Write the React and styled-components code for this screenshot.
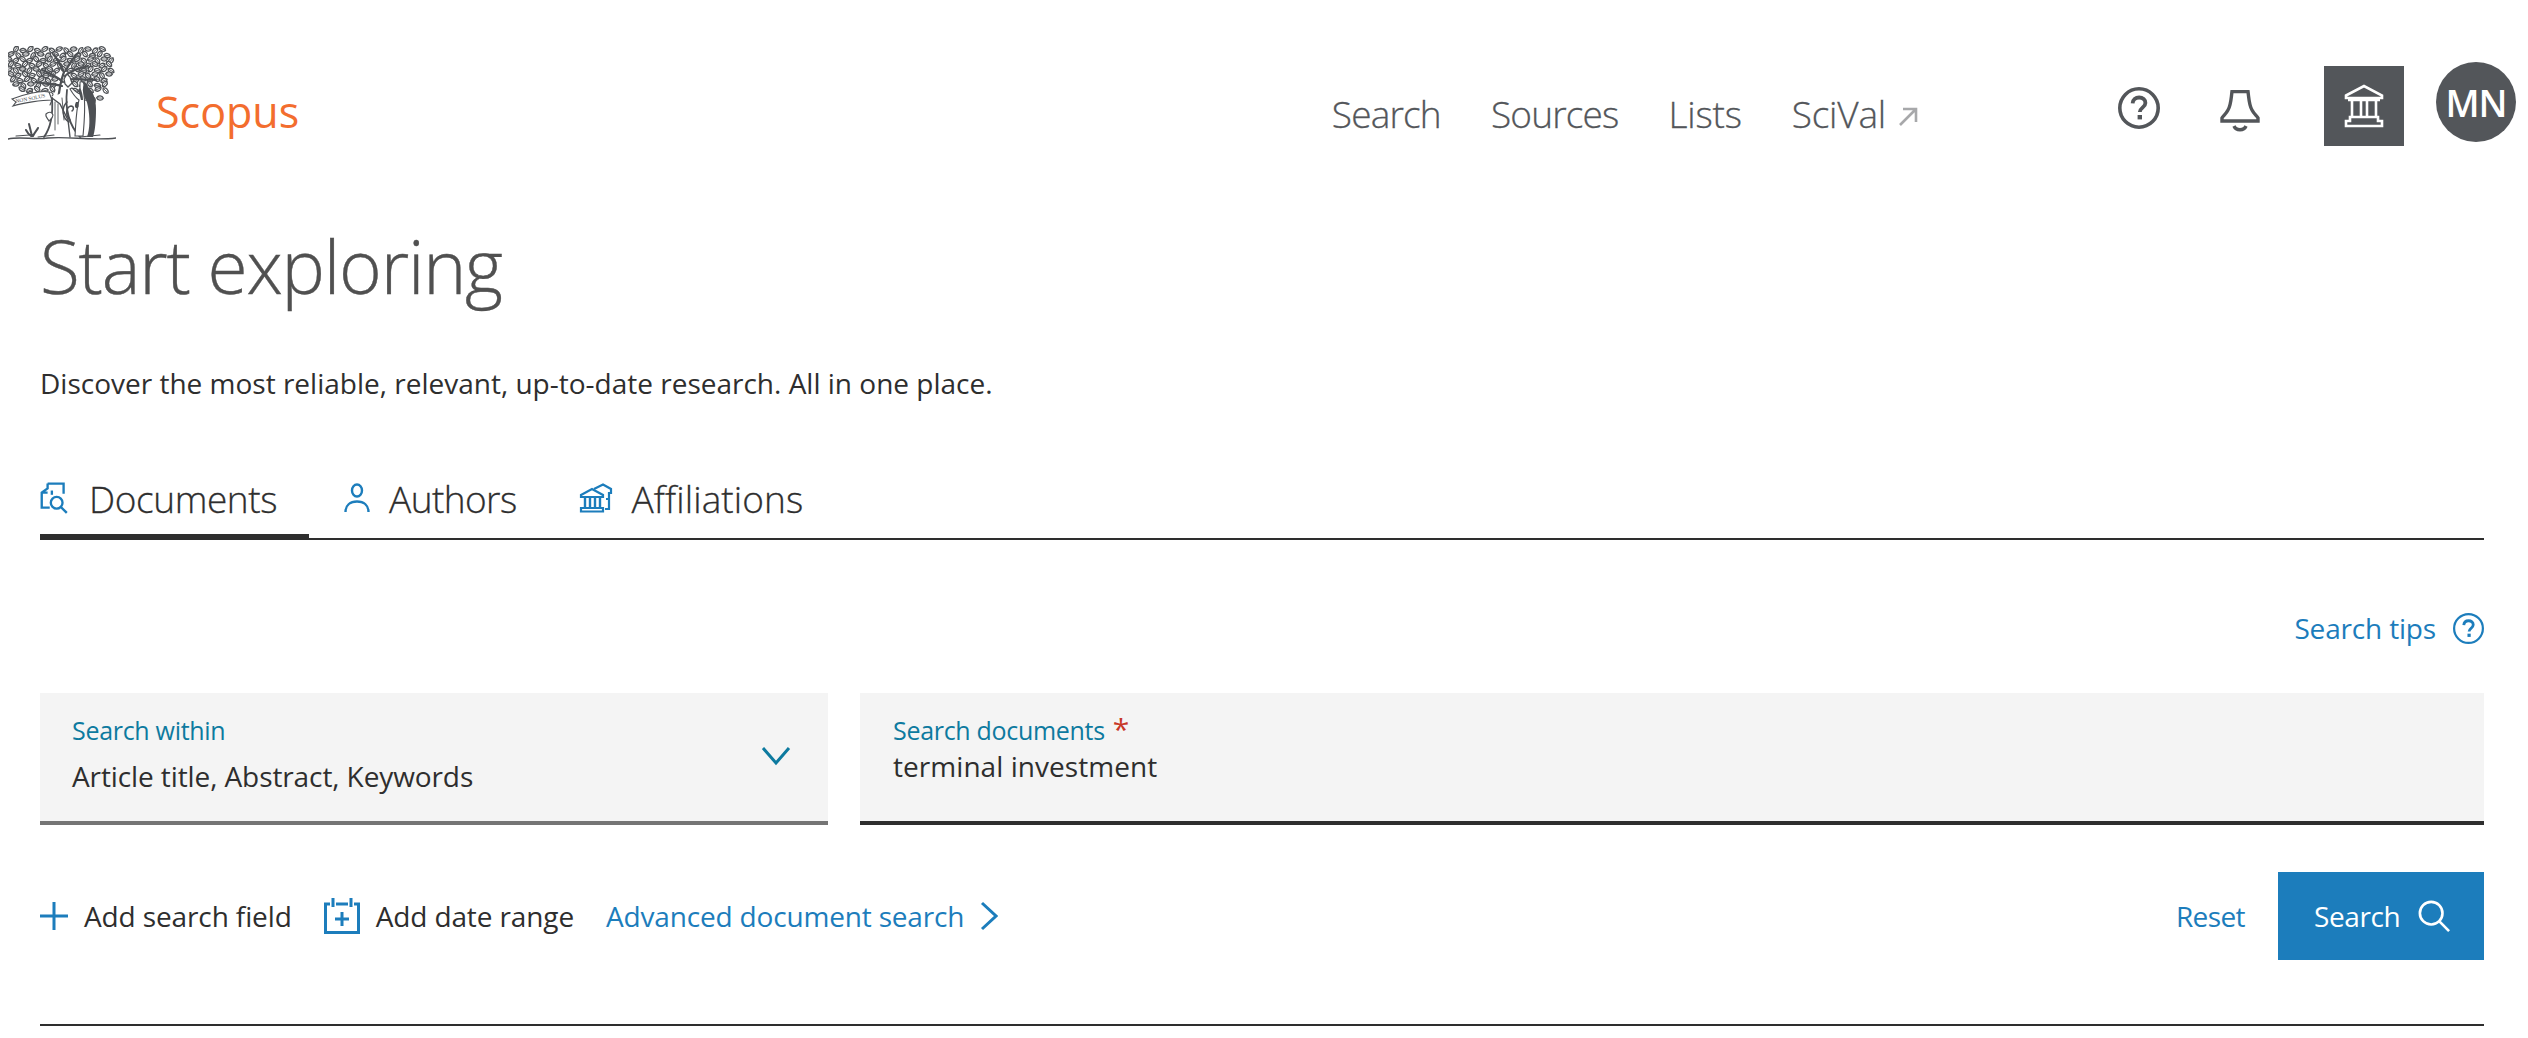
import React from "react";
import styled, { createGlobalStyle } from "styled-components";

const Global = createGlobalStyle`
  html, body { margin: 0; padding: 0; background: #fff; }
  body { font-family: "Open Sans", "Noto Sans", sans-serif; color: #2e2e2e; }
  * { box-sizing: border-box; }
`;

const Page = styled.div`
  width: 2528px;
  height: 1038px;
  overflow: hidden;
`;
const Header = styled.header`
  display: flex;
  align-items: flex-start;
  height: 190px;
  padding: 46px 12px 0 8px;
`;
const LogoMark = styled.svg`
  width: 108px;
  height: 96px;
  flex: none;
`;
const Brand = styled.a`
  margin: 40px 0 0 40px;
  font-size: 43px;
  line-height: 52px;
  color: #f36d2e;
`;
const Nav = styled.nav`
  display: flex;
  margin: 46px 0 0 auto;
  gap: 50px;
  align-items: center;
`;
const NavItem = styled.a`
  display: inline-flex;
  align-items: center;
  gap: 12px;
  font-size: 37px;
  font-weight: 300;
  -webkit-text-stroke: 0.3px currentColor;
  line-height: 44px;
  letter-spacing: ${(p) => p.$sp || "-0.8px"};
  color: #53565a;
`;
const HeaderIcons = styled.div`
  display: flex;
  align-items: flex-start;
  margin-left: 200px;
`;
const IconBtn = styled.svg`
  width: ${(p) => p.$w}px;
  height: ${(p) => p.$h}px;
  margin-top: ${(p) => p.$top}px;
  margin-right: ${(p) => p.$right}px;
  flex: none;
`;
const Institution = styled.div`
  width: 80px;
  height: 80px;
  margin-top: 20px;
  background: #53565a;
  display: flex;
  align-items: center;
  justify-content: center;
`;
const Avatar = styled.div`
  width: 80px;
  height: 80px;
  margin: 16px 0 0 32px;
  border-radius: 50%;
  background: #53565a;
  color: #fff;
  font-size: 37px;
  font-weight: 600;
  letter-spacing: -1px;
  display: flex;
  align-items: center;
  justify-content: center;
`;
const Main = styled.main`
  padding: 0 44px 0 40px;
`;
const Title = styled.h1`
  margin: 34px 0 0;
  font-size: 73px;
  line-height: 84px;
  font-weight: 300;
  -webkit-text-stroke: 0.4px currentColor;
  letter-spacing: -1.2px;
  color: #505050;
`;
const Lead = styled.p`
  margin: 57px 0 0;
  font-size: 28px;
  line-height: 36px;
  font-weight: 400;
  letter-spacing: 0;
  color: #2e2e2e;
`;
const Tabs = styled.div`
  display: flex;
  height: 82px;
  margin-top: 57px;
  border-bottom: 2px solid #2e2e2e;
`;
const Tab = styled.a`
  display: flex;
  align-items: center;
  gap: ${(p) => p.$gap}px;
  height: 80px;
  padding: 0 ${(p) => p.$padR}px 0 0;
  margin-left: ${(p) => p.$ml || 0}px;
  font-size: 37px;
  font-weight: 300;
  -webkit-text-stroke: 0.3px currentColor;
  letter-spacing: ${(p) => p.$sp};
  color: #2e2e2e;
  position: relative;
  ${(p) =>
    p.$active &&
    `&::after { content: ""; position: absolute; left: 0; right: 0; bottom: -2px; height: 6px; background: #2e2e2e; }`}
`;
const TipsRow = styled.div`
  display: flex;
  justify-content: flex-end;
  align-items: center;
  gap: 17px;
  margin-top: 70px;
  height: 36px;
`;
const BlueText = styled.a`
  font-size: 28px;
  font-weight: 400;
  line-height: 36px;
  letter-spacing: ${(p) => p.$sp || "-0.17px"};
  color: #1c7dbc;
`;
const Fields = styled.div`
  display: flex;
  gap: 32px;
  margin-top: 47px;
`;
const Field = styled.div`
  position: relative;
  flex: ${(p) => p.$flex};
  height: 132px;
  background: #f4f4f4;
  border-bottom: 4px solid ${(p) => p.$line};
  padding: ${(p) => p.$pad};
`;
const FieldLabel = styled.div`
  font-size: 25px;
  line-height: 32px;
  letter-spacing: -0.3px;
  color: #0d7a9f;
`;
const Required = styled.span`
  color: #c83727;
  font-size: 30px;
  line-height: 24px;
  margin-left: 8px;
`;
const FieldValue = styled.div`
  margin-top: ${(p) => p.$mt}px;
  font-size: 28px;
  line-height: 36px;
  letter-spacing: ${(p) => p.$sp};
  color: #2e2e2e;
`;
const Chevron = styled.svg`
  position: absolute;
  right: 37px;
  top: 53px;
  width: 30px;
  height: 20px;
`;
const Actions = styled.div`
  display: flex;
  align-items: center;
  margin-top: 47px;
  height: 88px;
`;
const ActionItem = styled.a`
  display: flex;
  align-items: center;
  gap: ${(p) => p.$gap}px;
  margin-right: ${(p) => p.$mr}px;
  font-size: 28px;
  letter-spacing: -0.12px;
  color: #2e2e2e;
`;
const Spacer = styled.div`
  flex: 1;
`;
const SearchButton = styled.button`
  display: flex;
  align-items: center;
  gap: 18px;
  width: 206px;
  height: 88px;
  margin-left: 33px;
  padding: 0 0 0 36px;
  border: 0;
  background: #1c7dbc;
  color: #fff;
  font-family: inherit;
  font-size: 28px;
  letter-spacing: -0.4px;
`;
const Rule = styled.hr`
  margin: 64px 0 0;
  border: 0;
  border-top: 2px solid #2e2e2e;
`;

/* canopy leaves: x, y, rotation */
const leaves = [];
const rows = [
  [3, 8, 96, 7.2], [8, 3, 102, 7.4], [13, 1, 106, 6.8], [18, 3, 104, 7], [23, 1, 106, 6.8],
  [28, 3, 104, 7], [33, 5, 102, 7], [38, 8, 100, 7.4], [43, 14, 100, 7.6], [48, 22, 40, 7], [52, 78, 98, 7]
];
rows.forEach(([y, a, b, step], ri) => {
  let i = 0;
  for (let x = a; x <= b; x += step) {
    const r = ((i * 67 + ri * 41) % 120) - 60;
    const dy = (i % 2) * 1.6;
    if (!(x > 50 && x < 62 && y > 26)) leaves.push([x, y + dy, r]);
    i += 1;
  }
});

const Tree = () => (
  <LogoMark viewBox="0 0 108 96" aria-hidden="true">
    <g stroke="#4d5054" fill="none" strokeLinecap="round">
      {leaves.map(([x, y, r], i) => (
        <g key={i} transform={`translate(${x} ${y}) rotate(${r})`}>
          <path d="M-3.4 0C-2-2.8 2-2.8 3.4 0C2 2.8-2 2.8-3.4 0Z" strokeWidth="1.3" fill="#fff" />
          <path d="M-2.2 0L2.4 0" strokeWidth=".8" />
        </g>
      ))}
      <path d="M50 56C51 44 53 34 56 26M55 36C48 30 42 27 34 24M54 40C46 38 38 38 28 36M57 30C63 25 70 22 80 20M58 34C66 32 76 34 88 34M56 26C53 20 50 14 46 9M58 24C62 18 64 12 70 7" strokeWidth="2.2" />
      <path d="M44 52C45 66 44 80 36 91H72C60 78 57 62 59 44C54 46 48 50 44 52Z" fill="#fff" stroke="none" />
      <path d="M44 52C45 66 44 80 36 91M59 44C57 62 60 78 72 91" strokeWidth="1.8" />
      <path d="M47 56L47 84M50 58L50 78M54 52L56 74" strokeWidth=".9" />
      <path d="M62 74c-5-5-4-13 1-14c3 0 3 4 1 5M59 56c-6 6-5 16 2 20" strokeWidth="1.5" />
      <path d="M44 52L52 58L60 74L62 91" strokeWidth="1.4" />
      <path d="M4 53C14 49 32 44 41 46L44 54C34 54 14 57 5 60L8 56Z" strokeWidth="1.1" fill="#fff" />
      <path d="M41 46C45 46 46 49 44 50M44 54L42 59" strokeWidth="1.1" />
      <path d="M38 68c3-3 6-2 7 1c0 3-3 5-4 6c-1-2-4-4-3-7Z" strokeWidth="1.1" fill="#fff" />
      <path d="M24 90C23 86 22 82 21 78M25 90C27 86 29 84 30 82M23 90C20 88 19 86 18 84" strokeWidth="2" />
      <path d="M0 93C12 90 26 94 40 92C60 90 84 95 108 92" strokeWidth="1.4" />
      <path d="M30 91L46 89M72 91L92 89M8 90L22 89" strokeWidth="1.1" />
    </g>
    <g fill="#4d5054">
      <path d="M74 36c3-1 6 2 6 5c5 4 8 12 8 22c0 12-1 22-3 28h-6c3-8 3-20 1-30c-1-6-3-10-6-13Z" />
      <path d="M72 36c2-1 4 0 4 3c-1 4-1 6 0 10c1 8 1 20-1 41h-8c1-14 1-26 4-36c-3-2-6-6-9-11l2-1c3 3 5 5 8 6c0-4 0-8 0-12Z" fill="#fff" stroke="#4d5054" strokeWidth="1.1" />
      <path d="M72 42c2 3 3 8 3 12l-2 0c-1-4-2-8-3-10Z" />
      <path d="M56 33l3-5l3 3l2 6l-4 4l-3-3Z" fill="#fff" stroke="#4d5054" strokeWidth="1.3" />
      <path d="M68 56c-2 4-1 6 1 6c2 0 2-3 1-6Z" />
    </g>
    <text x="8" y="57" fontFamily="Liberation Serif, serif" fontSize="5.4" fill="#4d5054" transform="rotate(-11 8 57)">NON SOLUS</text>
  </LogoMark>
);

const Help = ({ color = "#53565a", w = 42, sw = 3.6 }) => (
  <svg viewBox="0 0 42 42" width={w} height={w} style={{ display: "block", flex: "none" }}>
    <circle cx="21" cy="21" r={21 - sw / 2} fill="none" stroke={color} strokeWidth={sw} />
    <path d="M14.6 16.3c.3-3.6 3-5.8 6.5-5.8c3.7 0 6.3 2.2 6.3 5.4c0 4.6-5.6 4.9-5.6 9.2" fill="none" stroke={color} strokeWidth="3.8" />
    <rect x="19.6" y="28" width="4.4" height="4.4" fill={color} />
  </svg>
);

const Bank = () => (
  <svg viewBox="0 0 40 44" width="40" height="44" fill="none" stroke="#fff" strokeWidth="2.6">
    <path d="M2 11.5L20 2L38 11.5V14H2Z" />
    <path d="M8 16V33M17 16V33M23 16V33M32 16V33M4 16H36" />
    <path d="M6 33H34V37H38V42H2V37H6Z" />
  </svg>
);

const DocIcon = () => (
  <svg viewBox="0 0 26 30" width="28" height="32" fill="none" stroke="#1c7dbc" strokeWidth="2.2" style={{ flex: "none" }}>
    <path d="M7 1.5H22V11M7 1.5V6L1.5 10V24H9M1.5 10H7" />
    <path d="M11 8V12" />
    <circle cx="15.5" cy="19.5" r="5.5" />
    <path d="M19.5 23.5L25 29" />
  </svg>
);
const PersonIcon = () => (
  <svg viewBox="0 0 26 30" width="26" height="30" fill="none" stroke="#1c7dbc" strokeWidth="2.4" style={{ flex: "none" }}>
    <ellipse cx="13" cy="7.5" rx="5" ry="6" />
    <path d="M1.5 29C1.5 22.5 6 18.5 13 18.5C20 18.5 24.5 22.5 24.5 29" />
  </svg>
);
const AffilIcon = () => (
  <svg viewBox="0 0 34 30" width="34" height="30" fill="none" stroke="#1c7dbc" strokeWidth="2.2" style={{ flex: "none" }}>
    <path d="M15 6L24 1.5L32 6V10H30V26H26M30 16H27" />
    <path d="M2 12L13 6L24 12V14H2Z" fill="#fff" />
    <path d="M6 15V24M11 15V24M16 15V24M21 15V24" strokeWidth="2.4" />
    <path d="M2 25H24V28.5H2Z" />
  </svg>
);
const CalIcon = () => (
  <svg viewBox="0 0 36 36" width="36" height="36" fill="none" stroke="#1c7dbc" strokeWidth="3" style={{ flex: "none" }}>
    <path d="M6 6H1.5V34.5H34.5V6H30M12 6H24" />
    <path d="M9 0V9M27 0V9" />
    <path d="M18 14V28M11 21H25" />
  </svg>
);
const MagIcon = () => (
  <svg viewBox="0 0 34 34" width="32" height="32" fill="none" stroke="#fff" strokeWidth="2.8" style={{ flex: "none" }}>
    <circle cx="14" cy="14" r="12" />
    <path d="M23 23L33 33" />
  </svg>
);

export default function App() {
  return (
    <Page>
      <Global />
      <Header>
        <Tree />
        <Brand>Scopus</Brand>
        <Nav>
          <NavItem>Search</NavItem>
          <NavItem>Sources</NavItem>
          <NavItem $sp="-0.2px">Lists</NavItem>
          <NavItem $sp="-0.2px">
            SciVal
            <svg viewBox="0 0 20 20" width="20" height="20" fill="none" stroke="#a7a8aa" strokeWidth="2.6" style={{ marginTop: 6 }}>
              <path d="M2 18L18 2M5 2H18V15" />
            </svg>
          </NavItem>
        </Nav>
        <HeaderIcons>
          <IconBtn as="div" $w={42} $h={42} $top={41} $right={60}>
            <Help />
          </IconBtn>
          <IconBtn viewBox="0 0 40 42" $w={40} $h={42} $top={44} $right={64} fill="none" stroke="#53565a" strokeWidth="3.4">
            <path d="M12 1.5H28C29 9 29 15 32 20C34 24 37 26 38 28V31H2V28C3 26 6 24 8 20C11 15 11 9 12 1.5Z" />
            <path d="M14 36C16 41 24 41 26 36" />
          </IconBtn>
          <Institution>
            <Bank />
          </Institution>
          <Avatar>MN</Avatar>
        </HeaderIcons>
      </Header>
      <Main>
        <Title>Start exploring</Title>
        <Lead>Discover the most reliable, relevant, up-to-date research. All in one place.</Lead>
        <Tabs>
          <Tab $active $gap={21} $padR={32} $sp="-0.4px">
            <DocIcon />
            Documents
          </Tab>
          <Tab $gap={19} $padR={32} $ml={35} $sp="-0.6px">
            <PersonIcon />
            Authors
          </Tab>
          <Tab $gap={19} $padR={0} $ml={30} $sp="0.1px">
            <AffilIcon />
            Affiliations
          </Tab>
        </Tabs>
        <TipsRow>
          <BlueText>Search tips</BlueText>
          <Help color="#1c7dbc" w={31} sw={3} />
        </TipsRow>
        <Fields>
          <Field $flex="0 0 788px" $line="#757575" $pad="21px 0 0 32px">
            <FieldLabel>Search within</FieldLabel>
            <FieldValue $mt={12} $sp="-0.1px">Article title, Abstract, Keywords</FieldValue>
            <Chevron viewBox="0 0 30 20" fill="none" stroke="#0d7a9f" strokeWidth="3">
              <path d="M2 2L15 17L28 2" />
            </Chevron>
          </Field>
          <Field $flex="1" $line="#2e2e2e" $pad="21px 0 0 33px">
            <FieldLabel>
              Search documents<Required>*</Required>
            </FieldLabel>
            <FieldValue $mt={2} $sp="0.05px">terminal investment</FieldValue>
          </Field>
        </Fields>
        <Actions>
          <ActionItem $gap={16} $mr={32}>
            <svg viewBox="0 0 28 28" width="28" height="28" fill="none" stroke="#1c7dbc" strokeWidth="3" style={{ flex: "none" }}>
              <path d="M14 0V28M0 14H28" />
            </svg>
            Add search field
          </ActionItem>
          <ActionItem $gap={16} $mr={32}>
            <CalIcon />
            Add date range
          </ActionItem>
          <ActionItem $gap={16} $mr={0}>
            <BlueText>Advanced document search</BlueText>
            <svg viewBox="0 0 18 30" width="18" height="30" fill="none" stroke="#1c7dbc" strokeWidth="3" style={{ flex: "none" }}>
              <path d="M2 2L16 15L2 28" />
            </svg>
          </ActionItem>
          <Spacer />
          <BlueText $sp="-0.6px">Reset</BlueText>
          <SearchButton>
            Search
            <MagIcon />
          </SearchButton>
        </Actions>
        <Rule />
      </Main>
    </Page>
  );
}
